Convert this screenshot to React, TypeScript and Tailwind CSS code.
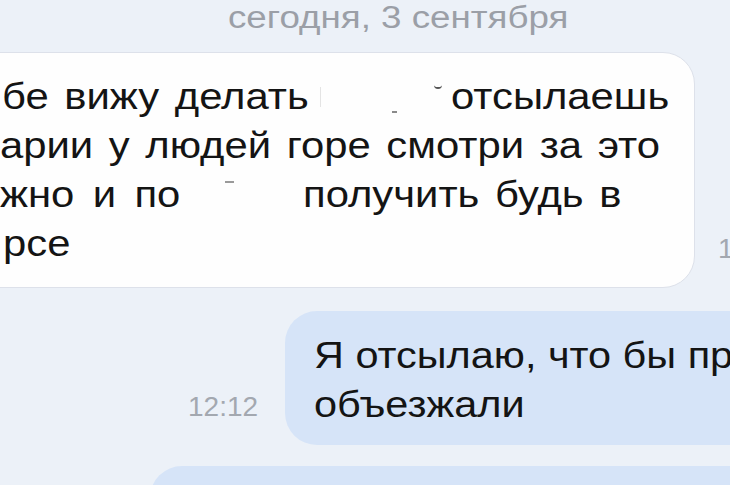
import React from "react";

const T = "inline-block origin-left scale-x-[1.13] [word-spacing:3.5px]";
const O = "inline-block origin-left scale-x-[1.12]";

export default function App() {
  return (
    <div className="w-[730px] h-[485px] overflow-hidden bg-[#ecf1f8] font-['Liberation_Sans',Arial,sans-serif]">
      {/* date */}
      <div className="h-[36px] pl-[228px] whitespace-nowrap text-[31px] leading-[36px] text-[#9b9fa7]">
        <span className="inline-block origin-left scale-x-[1.185]">сегодня, 3 сентября</span>
      </div>

      {/* incoming */}
      <div className="mt-[16px] flex items-end">
        <div className="ml-[-40px] w-[735px] shrink-0 rounded-[32px] border border-[#dde1ea] bg-[#fefefe] pl-[39px] pt-[19px] pb-[19px] text-[37px] leading-[49px] text-[#141414]">
          <div className="flex h-[49px] whitespace-nowrap">
            <div className="w-[320px] shrink-0 pl-[2px]">
              <span className={T}>бе вижу делать</span>
            </div>
            <div className="mt-[15px] h-[20px] w-[1px] shrink-0 bg-[#e4e4e4]" />
            <div className="w-[130px] shrink-0 flex items-start">
              <div className="ml-[71px] mt-[39px] h-[2px] w-[5px] bg-[#8a8a8a]" />
              <div className="ml-[37px] mt-[13px] h-[4px] w-[8px] rounded-b-full border-b-2 border-[#555]" />
            </div>
            <div className="shrink-0">
              <span className={T}>отсылаешь</span>
            </div>
          </div>
          <div className="flex h-[49px] whitespace-nowrap">
            <span className={T}>арии у людей горе смотри за это</span>
          </div>
          <div className="flex h-[49px] whitespace-nowrap">
            <div className="w-[225px] shrink-0">
              <span className="inline-block origin-left scale-x-[1.13] [word-spacing:6px]">жно и по</span>
            </div>
            <div className="w-[78px] shrink-0">
              <div className="mt-[11px] h-[2px] w-[9px] bg-[#9a9a9a]" />
            </div>
            <div className="shrink-0">
              <span className={T}>получить будь в</span>
            </div>
          </div>
          <div className="flex h-[49px] whitespace-nowrap pl-[3px]">
            <span className={T}>рсе</span>
          </div>
        </div>
        <span className="ml-[23px] mb-[23px] shrink-0 whitespace-nowrap text-[28px] leading-[32px] text-[#a3a8b0]">
          12:11
        </span>
      </div>

      {/* outgoing */}
      <div className="mt-[23px] flex items-end pl-[188px]">
        <span className="w-[97px] mb-[22px] shrink-0 whitespace-nowrap text-[28px] leading-[32px] text-[#a3a8b0]">
          12:12
        </span>
        <div className="w-[520px] h-[134px] shrink-0 rounded-[32px] bg-[#d6e4f8] pl-[29px] pt-[20px] text-[37px] leading-[49px] text-[#141414]">
          <div className="h-[49px] whitespace-nowrap">
            <span className={O}>Я отсылаю, что бы проезжали</span>
          </div>
          <div className="h-[49px] whitespace-nowrap">
            <span className={O}>объезжали</span>
          </div>
        </div>
      </div>

      {/* next outgoing bubble */}
      <div className="mt-[21px] ml-[150px] h-[40px] w-[620px] rounded-tl-[32px] bg-[#d6e4f8]" />
    </div>
  );
}
